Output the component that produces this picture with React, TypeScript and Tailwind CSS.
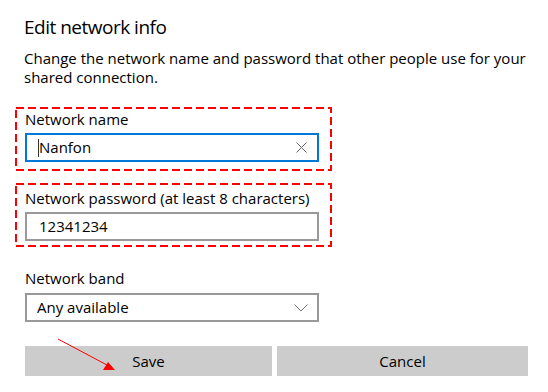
function DashedBox({ className, children }: { className: string; children: React.ReactNode }) {
  return (
    <div className={`relative ml-[15px] w-[317px] pl-[10px] ${className}`}>
      <svg className="absolute inset-0 pointer-events-none" width="317" height="64">
        <rect x="1" y="1" width="315" height="62" fill="none" stroke="#ff0000" strokeWidth="2" strokeDasharray="8 4" />
      </svg>
      {children}
    </div>
  );
}

export default function App() {
  return (
    <div
      className="relative w-[548px] h-[392px] bg-white text-black overflow-hidden"
      style={{ fontFamily: '"Open Sans", "Noto Sans", sans-serif' }}
    >
      <div className="pl-[24px] pt-[14px]">
        <h1 className="text-[19px] leading-[26px] font-normal tracking-[-0.5px]">Edit network info</h1>
        <p className="mt-[9px] text-[15px] leading-[19px] pr-[16px]">
          Change the network name and password that other people use for your shared connection.
        </p>
      </div>

      <DashedBox className="mt-[20px] h-[64px] pt-[2px]">
        <label className="block text-[15px] leading-[20px]">Network name</label>
        <div className="mt-[4px] w-[294px] h-[29px] border-2 border-[#0078d7] flex items-center pl-[11px] pr-[10px]">
          <span className="w-px h-[18px] bg-[#333]" />
          <span className="text-[15px] flex-1">Nanfon</span>
          <svg width="11" height="11" viewBox="0 0 11 11">
            <path d="M0.5 0.5 L10.5 10.5 M10.5 0.5 L0.5 10.5" stroke="#666" strokeWidth="1" />
          </svg>
        </div>
      </DashedBox>

      <DashedBox className="mt-[12px] h-[64px] pt-[5px]">
        <label className="block text-[15px] leading-[20px]">Network password (at least 8 characters)</label>
        <div className="mt-[4px] w-[294px] h-[29px] border-2 border-[#999999] flex items-center pl-[12px]">
          <span className="text-[15px]">12341234</span>
        </div>
      </DashedBox>

      <div className="pl-[25px]">
        <label className="block mt-[21px] text-[15px] leading-[20px]">Network band</label>
        <div className="mt-[5px] w-[294px] h-[29px] border-2 border-[#999999] flex items-center justify-between pl-[10px] pr-[9px]">
          <span className="text-[15px]">Any available</span>
          <svg width="14" height="8" viewBox="0 0 14 8">
            <path d="M0.5 0.5 L7 7 L13.5 0.5" stroke="#777" strokeWidth="1" fill="none" />
          </svg>
        </div>

        <div className="mt-[24px] flex gap-[5px] w-[503px]">
          <button className="w-[247px] h-[30px] bg-[#cccccc] text-[15px]">Save</button>
          <button className="flex-1 h-[30px] bg-[#cccccc] text-[15px]">Cancel</button>
        </div>
      </div>

      <svg className="absolute left-0 top-0 pointer-events-none" width="548" height="392">
        <line x1="58" y1="339" x2="107" y2="365" stroke="#ff0000" strokeWidth="1" />
        <polygon points="115,370 103,370 108,362" fill="#ff0000" />
      </svg>
    </div>
  );
}
